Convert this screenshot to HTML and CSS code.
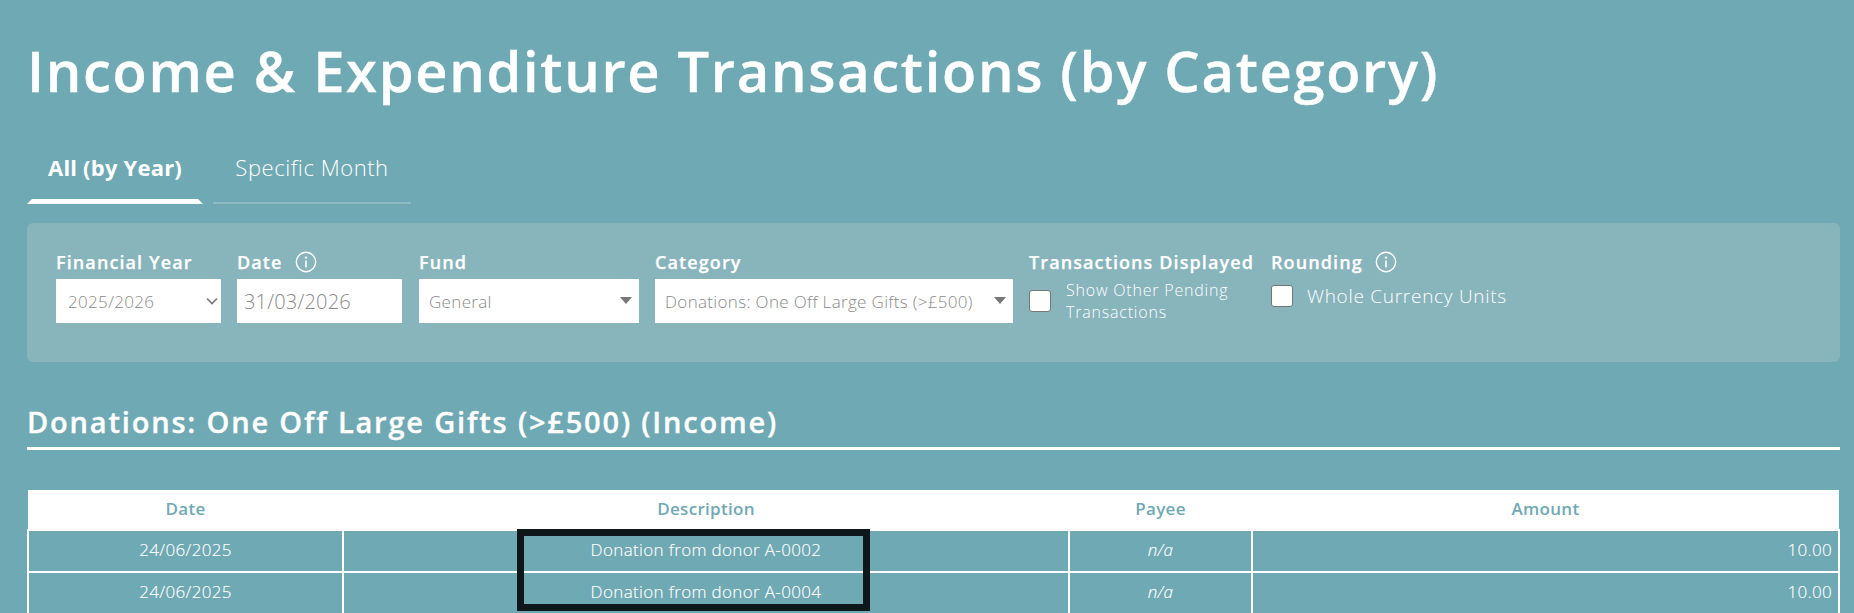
FILE: index.html
```html
<!DOCTYPE html>
<html lang="en">
<head>
<meta charset="utf-8">
<title>Income &amp; Expenditure Transactions (by Category)</title>
<link rel="stylesheet" href="styles.css">
</head>
<body>
<main class="page">
  <h1 class="title">Income &amp; Expenditure Transactions (by Category)</h1>
  <nav class="tabs">
    <a class="tab tab-active">All (by Year)</a>
    <a class="tab">Specific Month</a>
  </nav>
  <section class="filters">
    <div class="field field-year">
      <label class="label">Financial Year</label>
      <div class="control control-year">2025/2026
        <svg class="chevron" viewBox="0 0 12 8" width="12" height="8"><path d="M1 1.5 L6 6.5 L11 1.5" fill="none" stroke="#777" stroke-width="1.6"/></svg>
      </div>
    </div>
    <div class="field field-year field-date">
      <label class="label">Date
        <svg class="info" viewBox="0 0 22 22" width="22" height="22"><circle cx="11" cy="11" r="9.7" fill="none" stroke="#fff" stroke-width="1.4"/><circle cx="11" cy="6.6" r="1.2" fill="#fff"/><path d="M11 9.5V16.5" stroke="#fff" stroke-width="1.6"/></svg>
      </label>
      <div class="control control-date">31/03/2026</div>
    </div>
    <div class="field field-fund">
      <label class="label">Fund</label>
      <div class="control control-drop">General<span class="caret"></span></div>
    </div>
    <div class="field field-category">
      <label class="label">Category</label>
      <div class="control control-drop">Donations: One Off Large Gifts (&gt;£500)<span class="caret"></span></div>
    </div>
    <div class="field field-trans">
      <label class="label">Transactions Displayed</label>
      <div class="check-row">
        <span class="checkbox"></span>
        <span class="check-text check-small">Show Other Pending Transactions</span>
      </div>
    </div>
    <div class="field">
      <label class="label">Rounding
        <svg class="info" viewBox="0 0 22 22" width="22" height="22"><circle cx="11" cy="11" r="9.7" fill="none" stroke="#fff" stroke-width="1.4"/><circle cx="11" cy="6.6" r="1.2" fill="#fff"/><path d="M11 9.5V16.5" stroke="#fff" stroke-width="1.6"/></svg>
      </label>
      <div class="check-row check-row-single">
        <span class="checkbox"></span>
        <span class="check-text">Whole Currency Units</span>
      </div>
    </div>
  </section>
  <h2 class="heading">Donations: One Off Large Gifts (&gt;£500) (Income)</h2>
  <div class="table-wrap">
    <table class="data">
      <colgroup><col class="c1"><col class="c2"><col class="c3"><col class="c4"></colgroup>
      <thead>
        <tr><th>Date</th><th>Description</th><th>Payee</th><th>Amount</th></tr>
      </thead>
      <tbody>
        <tr><td>24/06/2025</td><td>Donation from donor A-0002</td><td class="na">n/a</td><td class="num">10.00</td></tr>
        <tr><td>24/06/2025</td><td>Donation from donor A-0004</td><td class="na">n/a</td><td class="num">10.00</td></tr>
      </tbody>
    </table>
    <div class="highlight"></div>
  </div>
</main>
</body>
</html>
```

FILE: styles.css
```css
html, body {
  margin: 0;
  height: 613px;
  overflow: hidden;
  background: #6fa9b4;
}
body {
  font-family: "Open Sans", sans-serif;
  color: #fff;
}
.page {
  padding: 0 14px 0 27px;
}
.title {
  margin: 0;
  padding-top: 34px;
  font-size: 56px;
  line-height: 72px;
  font-weight: 600;
  letter-spacing: 1.7px;
  -webkit-text-stroke: 0.4px #fff;
  white-space: nowrap;
}
.tabs {
  display: flex;
  gap: 10px;
  margin-top: 36px;
}
.tab {
  position: relative;
  display: block;
  box-sizing: border-box;
  height: 62px;
  line-height: 50px;
  font-size: 22px;
  font-weight: 300;
  letter-spacing: 0.55px;
  text-align: center;
  width: 198px;
  border-bottom: 2px solid #8fbac3;
}
.tab-active {
  width: 176px;
  font-weight: 700;
  letter-spacing: 0.2px;
  border-bottom: 5px solid #fff;
  border-left: 5px solid transparent;
  border-right: 5px solid transparent;
}
.filters {
  display: flex;
  gap: 16px;
  height: 139px;
  box-sizing: border-box;
  margin-top: 19px;
  padding: 24px 29px 0;
  background: #88b4bc;
  border-radius: 6px;
}
.field { flex: none; }
.field-year { width: 165px; }
.field-date { margin-right: 1px; }
.field-fund { width: 220px; }
.field-category { width: 358px; }
.field-trans { width: 226px; }
.label {
  display: flex;
  align-items: center;
  gap: 12px;
  height: 32px;
  padding-bottom: 2px;
  box-sizing: border-box;
  font-size: 18px;
  font-weight: 600;
  letter-spacing: 1.1px;
  -webkit-text-stroke: 0.25px #fff;
  white-space: nowrap;
}
.info { flex: none; }
.control {
  position: relative;
  box-sizing: border-box;
  height: 44px;
  line-height: 46px;
  background: #fff;
  color: #8a8a8a;
  font-size: 17px;
  font-weight: 300;
  letter-spacing: 0.33px;
  padding-left: 10px;
  white-space: nowrap;
}
.control-year { padding-left: 12px; }
.control-date { padding-left: 7px; font-size: 20px; letter-spacing: 0.2px; }
.chevron { position: absolute; right: 3px; top: 18px; }
.caret {
  position: absolute;
  right: 7px;
  top: 18px;
  border-left: 6px solid transparent;
  border-right: 6px solid transparent;
  border-top: 7px solid #777;
}
.check-row {
  display: flex;
  align-items: center;
  gap: 15px;
  height: 44px;
}
.check-row-single { height: 34px; gap: 14px; }
.checkbox {
  flex: none;
  box-sizing: border-box;
  width: 22px;
  height: 22px;
  background: #fff;
  border: 1.5px solid #767676;
  border-radius: 3px;
}
.check-text {
  font-size: 19px;
  font-weight: 300;
  letter-spacing: 0.72px;
  white-space: nowrap;
}
.check-small {
  font-size: 16px;
  line-height: 22px;
  letter-spacing: 0.8px;
  white-space: normal;
  width: 185px;
}
.heading {
  margin: 39px 0 0;
  height: 46px;
  box-sizing: content-box;
  font-size: 29px;
  line-height: 41px;
  font-weight: 600;
  letter-spacing: 1.82px;
  -webkit-text-stroke: 0.35px #fff;
  border-bottom: 3px solid #fff;
}
.table-wrap {
  position: relative;
  margin-top: 40px;
}
.data {
  width: 100%;
  table-layout: fixed;
  border-collapse: collapse;
  font-size: 17px;
  font-weight: 300;
}
.c1 { width: 315px; }
.c2 { width: 726px; }
.c3 { width: 183px; }
.data th {
  height: 40px;
  padding: 0 0 2px;
  box-sizing: border-box;
  background: #fff;
  color: #6fa9b4;
  font-size: 17px;
  font-weight: 600;
  letter-spacing: 0.3px;
}
.data td {
  height: 37px;
  padding: 0 0 3px;
  text-align: center;
  border: 2px solid #fff;
  letter-spacing: 0.35px;
  -webkit-text-stroke: 0.15px #fff;
}
.data .na { font-style: italic; }
.data .num { text-align: right; padding-right: 6px; }
.highlight {
  position: absolute;
  left: 490px;
  top: 39px;
  width: 353px;
  height: 82px;
  box-sizing: border-box;
  border: 7px solid #0e1719;
}
```
